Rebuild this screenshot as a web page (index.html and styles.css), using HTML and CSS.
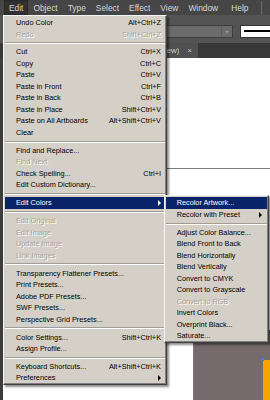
FILE: index.html
```html
<!DOCTYPE html>
<html>
<head>
<meta charset="utf-8">
<link rel="stylesheet" href="styles.css">
</head>
<body>
<div class="app">
  <div class="menubar">
    <div class="mi active">Edit</div>
    <div class="mi">Object</div>
    <div class="mi">Type</div>
    <div class="mi">Select</div>
    <div class="mi">Effect</div>
    <div class="mi">View</div>
    <div class="mi">Window</div>
    <div class="mi help">Help</div>
    <div class="vsep"></div>
  </div>
  <div class="toolbar">
    <div class="dropdown"><div class="dd-arrow"></div></div>
    <div class="stroke"><div class="stroke-line"></div></div>
  </div>
  <div class="tabbar">
    <div class="tab"><div class="tab-clip"><span class="tab-title">(CMYK/Preview)</span></div><span class="tab-x">×</span></div>
  </div>
  <div class="workspace">
    <div class="leftpanel"></div>
    <div class="canvas">
      <div class="guide"></div>
      <div class="artwork"></div>
      <div class="orange"></div>
      <div class="handle"></div>
    </div>
  </div>
</div>

<div class="menu edit-menu">
  <div class="item"><span>Undo Color</span><span>Alt+Ctrl+Z</span></div>
  <div class="item dis"><span>Redo</span><span>Shift+Ctrl+Z</span></div>
  <div class="sep"></div>
  <div class="item"><span>Cut</span><span>Ctrl+X</span></div>
  <div class="item"><span>Copy</span><span>Ctrl+C</span></div>
  <div class="item"><span>Paste</span><span>Ctrl+V</span></div>
  <div class="item"><span>Paste in Front</span><span>Ctrl+F</span></div>
  <div class="item"><span>Paste in Back</span><span>Ctrl+B</span></div>
  <div class="item"><span>Paste in Place</span><span>Shift+Ctrl+V</span></div>
  <div class="item"><span>Paste on All Artboards</span><span>Alt+Shift+Ctrl+V</span></div>
  <div class="item"><span>Clear</span></div>
  <div class="sep"></div>
  <div class="item"><span>Find and Replace...</span></div>
  <div class="item dis"><span>Find Next</span></div>
  <div class="item"><span>Check Spelling...</span><span>Ctrl+I</span></div>
  <div class="item"><span>Edit Custom Dictionary...</span></div>
  <div class="sep"></div>
  <div class="item hl"><span>Edit Colors</span><span class="arrow"></span></div>
  <div class="sep"></div>
  <div class="item dis"><span>Edit Original</span></div>
  <div class="item dis"><span>Edit Image</span></div>
  <div class="item dis"><span>Update Image</span></div>
  <div class="item dis"><span>Link Images</span></div>
  <div class="sep"></div>
  <div class="item"><span>Transparency Flattener Presets...</span></div>
  <div class="item"><span>Print Presets...</span></div>
  <div class="item"><span>Adobe PDF Presets...</span></div>
  <div class="item"><span>SWF Presets...</span></div>
  <div class="item"><span>Perspective Grid Presets...</span></div>
  <div class="sep"></div>
  <div class="item"><span>Color Settings...</span><span>Shift+Ctrl+K</span></div>
  <div class="item"><span>Assign Profile...</span></div>
  <div class="sep"></div>
  <div class="item"><span>Keyboard Shortcuts...</span><span>Alt+Shift+Ctrl+K</span></div>
  <div class="item"><span>Preferences</span><span class="arrow"></span></div>
</div>

<div class="menu sub-menu">
  <div class="item hl"><span>Recolor Artwork...</span></div>
  <div class="item"><span>Recolor with Preset</span><span class="arrow"></span></div>
  <div class="sep"></div>
  <div class="item"><span>Adjust Color Balance...</span></div>
  <div class="item"><span>Blend Front to Back</span></div>
  <div class="item"><span>Blend Horizontally</span></div>
  <div class="item"><span>Blend Vertically</span></div>
  <div class="item"><span>Convert to CMYK</span></div>
  <div class="item"><span>Convert to Grayscale</span></div>
  <div class="item dis"><span>Convert to RGB</span></div>
  <div class="item"><span>Invert Colors</span></div>
  <div class="item"><span>Overprint Black...</span></div>
  <div class="item"><span>Saturate...</span></div>
</div>
</body>
</html>
```
FILE: styles.css
```css
html, body {
  margin: 0;
  padding: 0;
}
body {
  width: 270px;
  height: 400px;
  overflow: hidden;
  position: relative;
  background: #fff;
  font-family: "Liberation Sans", Arial, sans-serif;
}
.app {
  display: flex;
  flex-direction: column;
  height: 400px;
}

/* menu bar */
.menubar {
  height: 15px;
  flex-shrink: 0;
  background: #464646;
  display: flex;
  padding-left: 4px;
  color: #d6d6d6;
  font-size: 8.4px;
  box-sizing: border-box;
}
.mi {
  padding: 1px 5px 0;
  line-height: 14px;
  white-space: nowrap;
}
.mi.help {
  margin-left: 3px;
}
.mi.active {
  background: #303030;
  box-shadow: inset 0 0 0 1px #282828;
}
.vsep {
  width: 1px;
  background: #6a6a6a;
  margin: 1px 8px 0 auto;
}

/* control bar */
.toolbar {
  height: 28px;
  flex-shrink: 0;
  background: #545454;
  display: flex;
  gap: 7px;
  padding: 10px 0 0 100px;
  box-sizing: border-box;
  overflow: hidden;
}
.dropdown {
  width: 133px;
  height: 13px;
  flex-shrink: 0;
  background: #6b6b6b;
  border: 1px solid #3e3e3e;
  box-sizing: border-box;
  display: flex;
  justify-content: flex-end;
}
.dd-arrow {
  width: 10px;
  border-left: 1px solid #5c5c5c;
  display: flex;
  align-items: center;
  justify-content: center;
}
.dd-arrow::after {
  content: "";
  border-top: 2px solid #9c9c9c;
  border-left: 2px solid transparent;
  border-right: 2px solid transparent;
}
.stroke {
  width: 40px;
  height: 13px;
  flex-shrink: 0;
  background: #fff;
  border: 1px solid #333;
  box-sizing: border-box;
  padding: 4px 0 0 3px;
}
.stroke-line {
  height: 2px;
  background: #000;
}

/* document tabs */
.tabbar {
  height: 15px;
  flex-shrink: 0;
  background: #383838;
  display: flex;
}
.tab {
  margin-left: 166px;
  width: 32px;
  box-sizing: border-box;
  background: #505050;
  display: flex;
  justify-content: flex-end;
  align-items: center;
  gap: 8px;
  padding-right: 6px;
  color: #d0d0d0;
  font-size: 8px;
  white-space: nowrap;
}
.tab-clip {
  width: 14px;
  overflow: hidden;
  display: flex;
  justify-content: flex-end;
}
.tab-title {
  flex-shrink: 0;
}
.tab-x {
  font-size: 8px;
  color: #c8c8c8;
}

/* workspace */
.workspace {
  flex: 1;
  display: flex;
}
.leftpanel {
  width: 3px;
  background: #3c3c3c;
}
.canvas {
  flex: 1;
  position: relative;
  background: #fff;
  overflow: hidden;
}
.guide {
  margin-top: 110px;
  height: 1px;
  background: #7c7c7c;
}
.artwork {
  position: absolute;
  left: 190px;
  top: 272px;
  right: 0;
  bottom: 0;
  background: #756b6c;
  border-left: 1px solid #4f7cf5;
}
.orange {
  position: absolute;
  left: 260px;
  top: 302px;
  right: 0;
  bottom: 0;
  background: #f6a400;
}
.handle {
  position: absolute;
  left: 258px;
  top: 300px;
  width: 3px;
  height: 3px;
  background: #4a76ff;
}

/* menus */
.menu {
  position: absolute;
  background: #d4d0c8;
  border: 1px solid;
  border-color: #f4f4f4 #404040 #404040 #f4f4f4;
  box-shadow: inset -1px -1px 0 #808080, 2px 2px 2px rgba(0, 0, 0, 0.45);
  padding: 1px 1px 0;
  font-size: 7.3px;
  color: #000;
  box-sizing: border-box;
}
.edit-menu {
  left: 3px;
  top: 15px;
  width: 164px;
}
.sub-menu {
  left: 164px;
  top: 195.3px;
  width: 105px;
}
.item {
  height: 11.5px;
  line-height: 11.5px;
  display: flex;
  justify-content: space-between;
  padding: 0 4px 0 11px;
  white-space: nowrap;
}
.sub-menu .item {
  padding: 0 5px 0 10.7px;
}
.item.dis {
  color: #a6a39b;
  text-shadow: 1px 1px 0 #fff;
}
.item.hl {
  background: #0a246a;
  color: #fff;
}
.arrow {
  width: 0;
  height: 0;
  align-self: center;
  border-left: 3px solid currentColor;
  border-top: 3px solid transparent;
  border-bottom: 3px solid transparent;
}
.sep {
  height: 6.43px;
  display: flex;
  align-items: center;
}
.sep::before {
  content: "";
  flex: 1;
  border-top: 1px solid #a09d96;
  border-bottom: 1px solid #fff;
}
```
